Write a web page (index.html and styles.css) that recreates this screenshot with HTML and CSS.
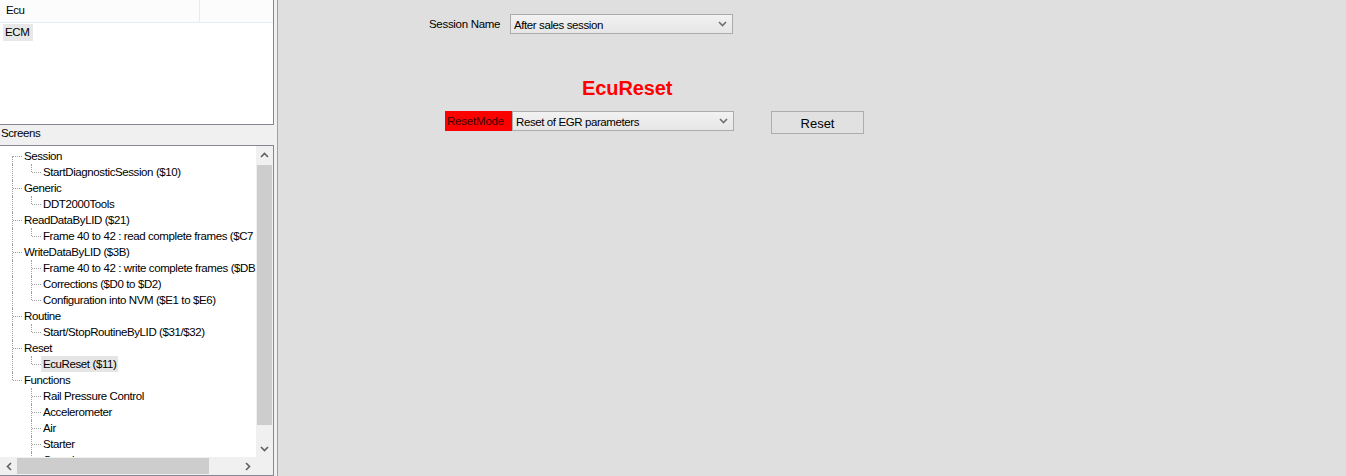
FILE: index.html
```html
<!DOCTYPE html>
<html>
<head>
<meta charset="utf-8">
<link rel="stylesheet" href="styles.css">
</head>
<body>
<div class="app">
  <div class="left">
    <div class="listbox">
      <div class="lhead">
        <div class="lcol1">Ecu</div>
        <div class="lcol2"></div>
      </div>
      <div class="lbody">
        <span class="litem">ECM</span>
      </div>
    </div>
    <div class="screens-label">Screens</div>
    <div class="treebox">
      <div class="treeinner">
        <div class="tree">
          <div class="row"><span class="g f"></span><span class="lbl">Session</span></div>
          <div class="row"><span class="g v"></span><span class="g l"></span><span class="lbl">StartDiagnosticSession ($10)</span></div>
          <div class="row"><span class="g t"></span><span class="lbl">Generic</span></div>
          <div class="row"><span class="g v"></span><span class="g l"></span><span class="lbl">DDT2000Tools</span></div>
          <div class="row"><span class="g t"></span><span class="lbl">ReadDataByLID ($21)</span></div>
          <div class="row"><span class="g v"></span><span class="g l"></span><span class="lbl">Frame 40 to 42 : read complete frames ($C7 to $C9)</span></div>
          <div class="row"><span class="g t"></span><span class="lbl">WriteDataByLID ($3B)</span></div>
          <div class="row"><span class="g v"></span><span class="g t"></span><span class="lbl">Frame 40 to 42 : write complete frames ($DB to $DD)</span></div>
          <div class="row"><span class="g v"></span><span class="g t"></span><span class="lbl">Corrections ($D0 to $D2)</span></div>
          <div class="row"><span class="g v"></span><span class="g l"></span><span class="lbl">Configuration into NVM ($E1 to $E6)</span></div>
          <div class="row"><span class="g t"></span><span class="lbl">Routine</span></div>
          <div class="row"><span class="g v"></span><span class="g l"></span><span class="lbl">Start/StopRoutineByLID ($31/$32)</span></div>
          <div class="row"><span class="g t"></span><span class="lbl">Reset</span></div>
          <div class="row"><span class="g v"></span><span class="g l"></span><span class="lbl sel">EcuReset ($11)</span></div>
          <div class="row"><span class="g l"></span><span class="lbl">Functions</span></div>
          <div class="row"><span class="g e"></span><span class="g t"></span><span class="lbl">Rail Pressure Control</span></div>
          <div class="row"><span class="g e"></span><span class="g t"></span><span class="lbl">Accelerometer</span></div>
          <div class="row"><span class="g e"></span><span class="g t"></span><span class="lbl">Air</span></div>
          <div class="row"><span class="g e"></span><span class="g t"></span><span class="lbl">Starter</span></div>
          <div class="row"><span class="g e"></span><span class="g t"></span><span class="lbl">Cooming</span></div>
        </div>
        <div class="vscroll">
          <div class="sbtn"><svg width="9" height="6" viewBox="0 0 9 6"><path d="M1 5 L4.5 1.5 L8 5" fill="none" stroke="#606060" stroke-width="1.6"/></svg></div>
          <div class="vtrack"><div class="vthumb"></div></div>
          <div class="sbtn"><svg width="9" height="6" viewBox="0 0 9 6"><path d="M1 1 L4.5 4.5 L8 1" fill="none" stroke="#606060" stroke-width="1.6"/></svg></div>
        </div>
      </div>
      <div class="hscroll">
        <div class="hbtn"><svg width="6" height="9" viewBox="0 0 6 9"><path d="M5 1 L1.5 4.5 L5 8" fill="none" stroke="#606060" stroke-width="1.6"/></svg></div>
        <div class="htrack"><div class="hthumb"></div></div>
        <div class="hbtn"><svg width="6" height="9" viewBox="0 0 6 9"><path d="M1 1 L4.5 4.5 L1 8" fill="none" stroke="#606060" stroke-width="1.6"/></svg></div>
        <div class="corner"></div>
      </div>
    </div>
  </div>
  <div class="splitter"></div>
  <div class="main">
    <div class="session-row">
      <span class="field-label">Session Name</span>
      <div class="combo session-combo"><span>After sales session</span><svg class="chev" width="9" height="6" viewBox="0 0 9 6"><path d="M1 1 L4.5 4.5 L8 1" fill="none" stroke="#707070" stroke-width="1.6"/></svg></div>
    </div>
    <div class="title">EcuReset</div>
    <div class="reset-row">
      <span class="mode-label">ResetMode</span>
      <div class="combo mode-combo"><span>Reset of EGR parameters</span><svg class="chev" width="9" height="6" viewBox="0 0 9 6"><path d="M1 1 L4.5 4.5 L8 1" fill="none" stroke="#707070" stroke-width="1.6"/></svg></div>
      <button class="btn">Reset</button>
    </div>
  </div>
</div>
</body>
</html>
```

FILE: styles.css
```css
* { box-sizing: border-box; }
html, body { margin: 0; padding: 0; }
body {
  width: 1346px;
  height: 476px;
  overflow: hidden;
  font-family: "Liberation Sans", Arial, sans-serif;
  font-size: 11.5px;
  letter-spacing: -0.4px;
  color: #000;
  background: #dfdfdf;
}
.app { display: flex; height: 476px; }
.left {
  width: 274px;
  flex: none;
  background: #f0f0f0;
  display: flex;
  flex-direction: column;
}
.listbox {
  height: 125px;
  border: 1px solid #828790;
  border-top: none;
  border-left: none;
  background: #fff;
  flex: none;
}
.lhead {
  display: flex;
  height: 23px;
  border-bottom: 1px solid #e5ecf7;
  background: #fcfcfc;
}
.lcol1 {
  width: 200px;
  border-right: 1px solid #e5ecf7;
  padding: 4px 0 0 6px;
}
.lcol2 { flex: 1; }
.lbody { padding: 1px 0 0 3px; }
.litem {
  display: inline-block;
  background: #e8e8e8;
  padding: 1px 4px 2px 2px;
  line-height: 14px;
}
.screens-label {
  height: 20px;
  padding: 1px 0 0 1px;
  line-height: 14px;
  flex: none;
}
.treebox {
  flex: 1;
  border: 1px solid #828790;
  border-left: none;
  background: #fff;
  display: flex;
  flex-direction: column;
  min-height: 0;
}
.treeinner { flex: 1; display: flex; min-height: 0; overflow: hidden; }
.tree {
  flex: 1;
  overflow: hidden;
  padding: 2px 0 0 2px;
  min-width: 0;
}
.row {
  display: flex;
  align-items: center;
  height: 16px;
  white-space: nowrap;
}
.g {
  flex: none;
  width: 19px;
  height: 16px;
  position: relative;
}
.g::before, .g::after { content: ""; position: absolute; }
.g.v::before, .g.t::before {
  left: 10px; top: 0; height: 16px;
  border-left: 1px dotted #a0a0a0;
}
.g.l::before {
  left: 10px; top: 0; height: 8px;
  border-left: 1px dotted #a0a0a0;
}
.g.f::before {
  left: 10px; top: 8px; height: 8px;
  border-left: 1px dotted #a0a0a0;
}
.g.t::after, .g.l::after, .g.f::after {
  left: 11px; top: 8px; width: 9px;
  border-top: 1px dotted #a0a0a0;
}
.lbl {
  padding: 0 2px 0 2px;
  line-height: 16px;
  margin-left: 1px;
}
.lbl.sel { background: #e5e5e5; }
.vscroll {
  width: 17px;
  flex: none;
  background: #f0f0f0;
  display: flex;
  flex-direction: column;
}
.sbtn {
  height: 17px;
  flex: none;
  display: flex;
  align-items: center;
  justify-content: center;
}
.vtrack { flex: 1; padding: 2px 1px; }
.vthumb { height: 260px; background: #cdcdcd; }
.hscroll {
  height: 18px;
  flex: none;
  display: flex;
  background: #f0f0f0;
}
.hbtn {
  width: 17px;
  flex: none;
  display: flex;
  align-items: center;
  justify-content: center;
}
.htrack { flex: 1; padding: 1px 0; }
.hthumb { width: 192px; height: 100%; background: #cdcdcd; }
.corner { width: 17px; flex: none; background: #f0f0f0; }
.splitter {
  width: 4px;
  flex: none;
  background: #f0f0f0;
  border-right: 1px solid #a0a0a0;
}
.main {
  flex: 1;
  display: flex;
  flex-direction: column;
}
.session-row {
  display: flex;
  align-items: center;
  margin: 14px 0 0 151px;
  height: 20px;
}
.field-label { width: 81px; letter-spacing: -0.3px; }
.combo {
  height: 20px;
  border: 1px solid #acacac;
  background: linear-gradient(#f2f2f2, #e6e6e6);
  display: flex;
  align-items: center;
  justify-content: space-between;
  padding: 2px 5px 0 3px;
}
.combo .chev { margin-top: -2px; }
.session-combo { width: 223px; }
.title {
  margin: 43px 0 0 304px;
  color: #ff0000;
  font-weight: bold;
  font-size: 20px;
  letter-spacing: -0.1px;
  line-height: 22px;
}
.reset-row {
  display: flex;
  align-items: flex-start;
  margin: 12px 0 0 167px;
}
.mode-label {
  background: #ff0000;
  color: #400000;
  height: 20px;
  width: 67px;
  line-height: 21px;
  padding-left: 2px;
  letter-spacing: -0.2px;
}
.mode-combo { width: 222px; }
.btn {
  margin-left: 37px;
  width: 93px;
  height: 23px;
  border: 1px solid #adadad;
  background: #e1e1e1;
  font-family: "Liberation Sans", Arial, sans-serif;
  font-size: 13px;
  letter-spacing: 0;
  color: #000;
  padding: 2px 0 0 0;
}
```
